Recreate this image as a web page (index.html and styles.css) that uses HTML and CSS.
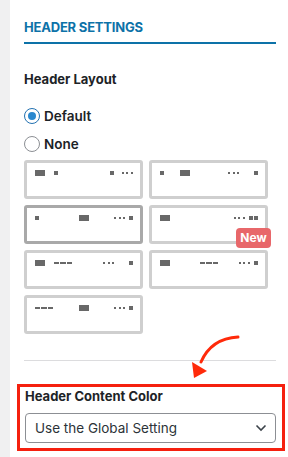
FILE: index.html
```html
<!DOCTYPE html>
<html lang="en">
<head>
    <meta charset="UTF-8">
    <meta name="viewport" content="width=device-width, initial-scale=1.0">
    <title>Header Settings</title>
    <link rel="stylesheet" href="styles.css">
</head>
<body>
    <div class="panel">
        <h2 class="section-title">Header Settings</h2>

        <h3 class="field-label">Header Layout</h3>
        <label class="radio-row">
            <span class="radio checked"></span> Default
        </label>
        <label class="radio-row">
            <span class="radio"></span> None
        </label>

        <div class="layout-grid">
            <div class="layout-card">
                <div class="slot">
                    <span class="logo"></span><span class="sq gap-9"></span>
                </div>
                <div class="slot"></div>
                <div class="slot right">
                    <span class="sq"></span><span class="dots gap-8"></span>
                </div>
            </div>
            <div class="layout-card">
                <div class="slot">
                    <span class="sq"></span><span class="logo gap-16"></span>
                </div>
                <div class="slot"></div>
                <div class="slot right">
                    <span class="dots"></span><span class="sq gap-15"></span>
                </div>
            </div>
            <div class="layout-card selected">
                <div class="slot"><span class="sq"></span></div>
                <div class="slot"><span class="logo"></span></div>
                <div class="slot right">
                    <span class="dots"></span><span class="sq gap-4"></span>
                </div>
            </div>
            <div class="layout-card">
                <div class="slot"><span class="logo"></span></div>
                <div class="slot"></div>
                <div class="slot right">
                    <span class="dots"></span><span class="sq gap-4"></span><span class="sq gap-1"></span>
                </div>
                <span class="badge">New</span>
            </div>
            <div class="layout-card">
                <div class="slot">
                    <span class="logo"></span><span class="dashes gap-9"></span>
                </div>
                <div class="slot"></div>
                <div class="slot right">
                    <span class="dots"></span><span class="sq gap-15"></span>
                </div>
            </div>
            <div class="layout-card">
                <div class="slot"><span class="logo"></span></div>
                <div class="slot"><span class="dashes"></span></div>
                <div class="slot right">
                    <span class="dots"></span><span class="sq gap-4"></span>
                </div>
            </div>
            <div class="layout-card">
                <div class="slot"><span class="dashes"></span></div>
                <div class="slot"><span class="logo"></span></div>
                <div class="slot right">
                    <span class="dots"></span><span class="sq gap-4"></span>
                </div>
            </div>
        </div>

        <hr class="divider">

        <div class="highlight">
            <h3 class="field-label">Header Content Color</h3>
            <div class="select">
                <span>Use the Global Setting</span>
                <svg class="chevron" width="12" height="8" viewBox="0 0 12 8">
                    <path d="M1.5 1.5 L6 6 L10.5 1.5" fill="none" stroke="#3c434a" stroke-width="1.6"/>
                </svg>
            </div>
        </div>

        <!-- annotation arrow -->
        <svg class="arrow" width="60" height="56" viewBox="0 0 60 56">
            <path d="M58 7 C 40 8, 28 16, 21 32" fill="none" stroke="#ff2a0a" stroke-width="3" stroke-linecap="round"/>
            <polygon points="12,32 27,41 14,48" fill="#ff2a0a"/>
        </svg>
    </div>
</body>
</html>
```

FILE: styles.css
```css
body {
    margin: 0;
    padding: 0;
    font-family: Inter, "Noto Sans", sans-serif;
    color: #1d2327;
    background: #f0f0f1;
}

.panel {
    position: relative;
    margin-left: 10px;
    background: #fff;
    min-height: 457px;
    padding: 19px 12px 0 14px;
    box-sizing: border-box;
}

.section-title {
    margin: 0;
    padding-bottom: 7px;
    border-bottom: 2px solid #0d72a8;
    color: #0d72a8;
    font-size: 13px;
    font-weight: 700;
    letter-spacing: -0.2px;
    text-transform: uppercase;
    line-height: 16px;
}

.field-label {
    margin: 0;
    font-size: 13px;
    font-weight: 700;
    line-height: 16px;
}

.panel > .field-label {
    margin-top: 27px;
    margin-bottom: 21px;
}

.radio-row {
    display: flex;
    align-items: center;
    gap: 4px;
    height: 16px;
    font-size: 13.5px;
    font-weight: 600;
}

.radio-row + .radio-row {
    margin-top: 12px;
}

.radio {
    width: 16px;
    height: 16px;
    border: 1px solid #8c8f94;
    border-radius: 50%;
    box-sizing: border-box;
    display: flex;
    align-items: center;
    justify-content: center;
}

.radio.checked {
    border-color: #2271b1;
}

.radio.checked::after {
    content: "";
    width: 8px;
    height: 8px;
    border-radius: 50%;
    background: #2a88cf;
}

.layout-grid {
    display: grid;
    grid-template-columns: 119px 119px;
    column-gap: 6px;
    row-gap: 6px;
    margin-top: 8px;
}

.layout-card {
    position: relative;
    height: 39px;
    box-sizing: border-box;
    border: 3px solid #cfcfcf;
    border-radius: 3px;
    padding: 7px 7px 0 8px;
    display: grid;
    grid-template-columns: 1fr auto 1fr;
    align-items: start;
}

.layout-card.selected {
    border-color: #a9a9a9;
}

.slot {
    display: flex;
    align-items: center;
    height: 6px;
}

.slot.right {
    justify-content: flex-end;
}

.logo {
    width: 10px;
    height: 6px;
    background: #686868;
}

.sq {
    width: 4px;
    height: 4px;
    background: #686868;
}

.dots {
    width: 11px;
    height: 2px;
    background: repeating-linear-gradient(90deg, #686868 0 2px, transparent 2px 4.5px);
}

.dashes {
    width: 18px;
    height: 2px;
    background: linear-gradient(90deg, #686868 0 5px, transparent 5px 6px, #686868 6px 12px, transparent 12px 13px, #686868 13px 18px);
}

.gap-1 { margin-left: 1px; }
.gap-4 { margin-left: 4px; }
.gap-8 { margin-left: 8px; }
.gap-9 { margin-left: 9px; }
.gap-15 { margin-left: 15px; }
.gap-16 { margin-left: 16px; }

.badge {
    position: absolute;
    right: -6px;
    bottom: -7px;
    width: 35px;
    height: 20px;
    border-radius: 4px;
    background: #e8676a;
    color: #fff;
    font-size: 12px;
    font-weight: 700;
    line-height: 20px;
    text-align: center;
}

.divider {
    margin: 26px 0 0;
    border: 0;
    border-top: 1px solid #dcdcde;
}

.highlight {
    margin: 23px -9px 0 -7px;
    border: 3px solid #f5200f;
    padding: 1px 6px 5px 5px;
}

.highlight .field-label {
    margin-bottom: 9px;
}

.select {
    height: 30px;
    box-sizing: border-box;
    border: 1px solid #8c8f94;
    border-radius: 4px;
    padding: 0 8px 0 9px;
    display: flex;
    align-items: center;
    justify-content: space-between;
    font-size: 13.5px;
    color: #2c3338;
}

.arrow {
    position: absolute;
    left: 170px;
    top: 330px;
}
```
